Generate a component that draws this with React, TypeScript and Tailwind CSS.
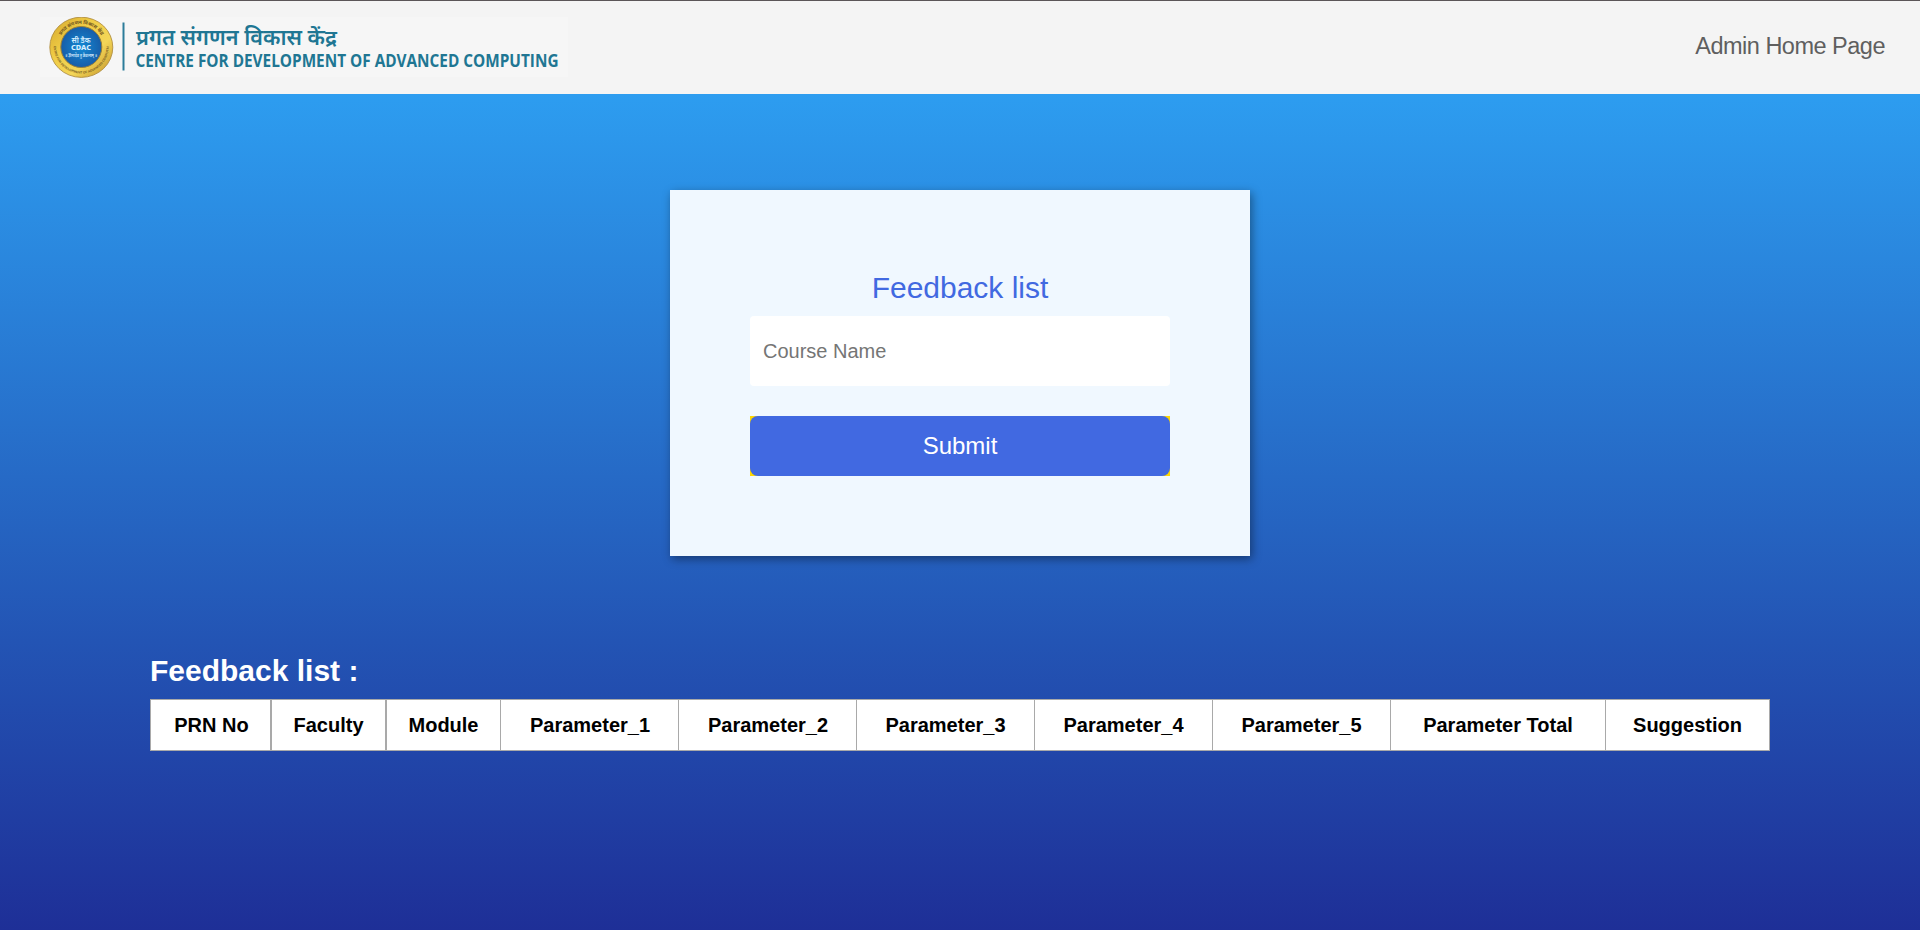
const columns = [
  { label: 'PRN No', cell: 'w-[121px] border-r-2 pl-[2px]' },
  { label: 'Faculty', cell: 'w-[115px] border-r-2' },
  { label: 'Module', cell: 'w-[114px] border-r' },
  { label: 'Parameter_1', cell: 'w-[178px] border-r pl-px' },
  { label: 'Parameter_2', cell: 'w-[178px] border-r pl-px' },
  { label: 'Parameter_3', cell: 'w-[178px] border-r' },
  { label: 'Parameter_4', cell: 'w-[178px] border-r' },
  { label: 'Parameter_5', cell: 'w-[178px] border-r' },
  { label: 'Parameter Total', cell: 'w-[215px] border-r' },
  { label: 'Suggestion', cell: 'w-[163px]' },
];

function Seal() {
  return (
    <svg className="block h-[62px] w-[66px] shrink-0" viewBox="0 0 66 62">
      <defs>
        <linearGradient id="gold" x1="0" y1="0" x2="1" y2="1">
          <stop offset="0" stopColor="#d3a72e" />
          <stop offset=".35" stopColor="#efcb45" />
          <stop offset=".65" stopColor="#f3d658" />
          <stop offset="1" stopColor="#c08f25" />
        </linearGradient>
        <radialGradient id="blue">
          <stop offset="0" stopColor="#1389d4" />
          <stop offset="1" stopColor="#175da8" />
        </radialGradient>
        <path id="upper" d="M8.8 30.5a23.5 23.5 0 0 1 47 0" />
        <path id="lower" d="M4.8 29a27.5 27.5 0 1 0 55 0" />
      </defs>
      <ellipse cx="32.3" cy="30.3" rx="31.5" ry="30.1" fill="url(#gold)" stroke="#a98535" strokeWidth=".8" />
      <circle cx="32.3" cy="30" r="20.5" fill="url(#blue)" stroke="#9a8038" strokeWidth="1" />
      <g fontFamily="'Noto Sans', sans-serif" fontWeight="700" fill="#75591f" textAnchor="middle">
        <text fontSize="5">
          <textPath href="#upper" startOffset="50%">प्रगत संगणन विकास केंद्र</textPath>
        </text>
        <text fontSize="3.2" fontFamily="'Liberation Sans', sans-serif">
          <textPath href="#lower" startOffset="50%">CENTRE FOR DEVELOPMENT OF ADVANCED COMPUTING</textPath>
        </text>
      </g>
      <g fill="#d8efff" textAnchor="middle" fontFamily="'Noto Sans', sans-serif" fontWeight="600">
        <text x="32" y="25.5" fontSize="8" textLength="19" lengthAdjust="spacingAndGlyphs">सी डैक</text>
        <text x="32" y="33" fontSize="7" fontWeight="800" textLength="20" lengthAdjust="spacingAndGlyphs">CDAC</text>
        <text x="32" y="39.5" fontSize="4.5" textLength="32" lengthAdjust="spacingAndGlyphs">॥ ज्ञानादेव तु कैवल्यम् ॥</text>
      </g>
    </svg>
  );
}

function Wordmark() {
  return (
    <svg
      className="block h-[60px] w-[452px] shrink-0"
      viewBox="0 0 452 60"
      fill="#207693"
      fontFamily="'Open Sans', 'Noto Sans', sans-serif"
    >
      <path d="M8.5 5.5v48" stroke="#2c7c9a" strokeWidth="2" />
      <text x="21" y="27.5" fontSize="22" fontWeight="600" textLength="201" lengthAdjust="spacingAndGlyphs">प्रगत संगणन विकास केंद्र</text>
      <text x="20.5" y="50" fontSize="18.4" fontWeight="700" textLength="423" lengthAdjust="spacingAndGlyphs">CENTRE FOR DEVELOPMENT OF ADVANCED COMPUTING</text>
    </svg>
  );
}

export default function App() {
  return (
    <div className="flex h-[930px] flex-col overflow-hidden bg-[linear-gradient(to_bottom,#2d9ef1_0%,#2d9df0_10%,#2354b4_69%,#1e2f97_100%)] font-['Liberation_Sans',Arial,sans-serif]">
      <header className="flex h-[94px] shrink-0 justify-between border-t border-[#5b5558] bg-[#f4f4f4] pr-[35px] pl-10">
        <div className="mt-4 flex h-[60px] w-[528px] bg-[#f6f6f6] pl-[9px]">
          <Seal />
          <Wordmark />
        </div>
        <a className="mt-[30px] text-[23.5px] leading-[30px] tracking-[-0.5px] text-[#5f5f5f]">Admin Home Page</a>
      </header>

      <main className="flex flex-col items-center">
        <form className="mt-24 flex h-[366px] w-[580px] flex-col bg-[aliceblue] px-20 pt-20 shadow-[2px_3px_9px_rgba(0,0,0,0.4)]" onSubmit={(e) => e.preventDefault()}>
          <h1 className="h-[46px] text-center text-[30px] leading-9 text-[royalblue]">Feedback list</h1>
          <input
            className="h-[70px] w-full rounded bg-white px-[13px] text-xl outline-none placeholder:text-[#757575]"
            placeholder="Course Name"
          />
          <div className="mt-[30px] bg-[gold]">
            <button className="block h-[60px] w-full rounded-lg bg-[royalblue] text-2xl text-white">Submit</button>
          </div>
        </form>

        <section className="mt-[97px] w-[1620px]">
          <h2 className="h-[46px] text-[30px] leading-9 font-bold text-white">Feedback list :</h2>
          <table className="w-full table-fixed border-separate border-spacing-0 border border-[#a9a9a9] bg-white">
            <thead>
              <tr className="h-[50px]">
                {columns.map((c) => (
                  <th key={c.label} className={`border-[#a9a9a9] p-0 text-xl font-bold text-black ${c.cell}`}>
                    {c.label}
                  </th>
                ))}
              </tr>
            </thead>
          </table>
        </section>
      </main>
    </div>
  );
}
